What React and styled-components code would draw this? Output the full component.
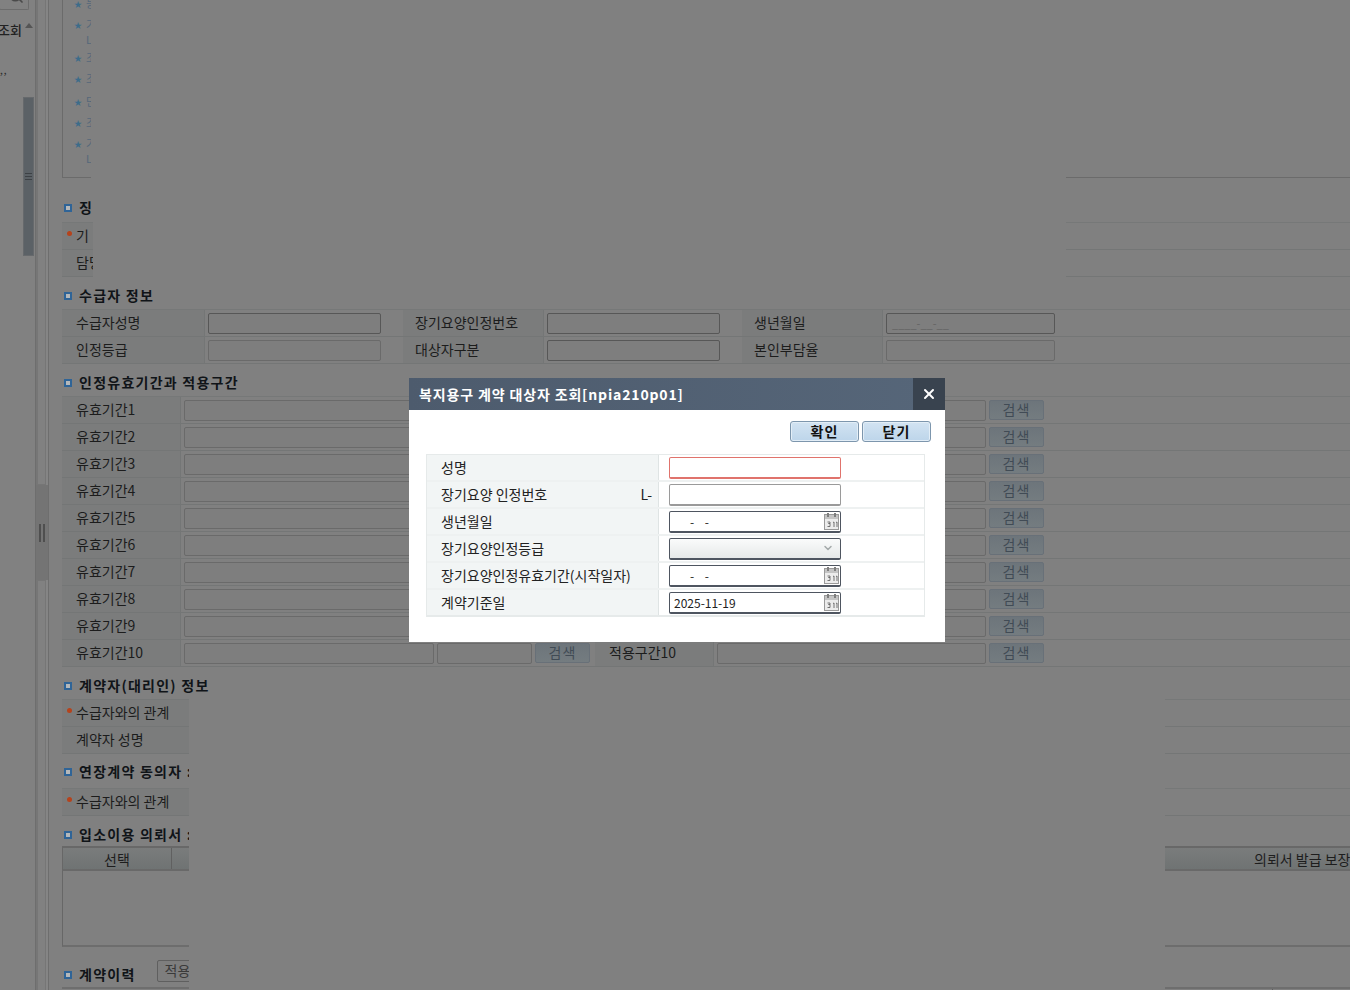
import React from "react";
import styled, { createGlobalStyle } from "styled-components";
import { Search, ChevronDown, X } from "lucide-react";

const GlobalStyle = createGlobalStyle`
  html, body {
    margin: 0;
    padding: 0;
    background: #808080;
    overflow: hidden;
  }
  * {
    box-sizing: border-box;
  }
`;

const FONT = `"Noto Sans CJK KR", "Noto Sans", sans-serif`;

const Page = styled.div`
  position: relative;
  display: flex;
  width: 1350px;
  height: 990px;
  overflow: hidden;
  background: #808080;
  color: #1d1d1d;
  font-family: ${FONT};
  font-size: 14px;
`;

/* left tree panel */
const Sidebar = styled.div`
  flex: 0 0 35px;
  display: flex;
  flex-direction: column;
  background: #818181;
`;

const SearchBtn = styled.div`
  width: 30px;
  height: 10px;
  margin-left: -1px;
  display: flex;
  align-items: flex-end;
  justify-content: flex-end;
  padding-right: 4px;
  border: 1px solid #6c6c6c;
  border-top: 0;
  border-radius: 0 0 2px 2px;
  overflow: hidden;
  color: #4a4a4a;
`;

const SearchGlyph = styled.div`
  margin-bottom: 1px;
`;

const TreeHead = styled.div`
  display: flex;
  justify-content: flex-end;
  height: 15px;
  margin-top: 12px;
  padding-right: 2px;
  gap: 3px;
  line-height: 15px;
  font-size: 13px;
  font-weight: 500;
  color: #222;
`;

const TreeTitle = styled.span`
  width: 26px;
  margin-left: -6px;
  white-space: nowrap;
  overflow: hidden;
  direction: rtl;
`;

const TreeArrow = styled.i`
  width: 0;
  height: 0;
  margin-top: 1px;
  border: 4px solid transparent;
  border-top: 0;
  border-bottom: 5px solid #555;
`;

const TreeDots = styled.div`
  margin-top: 29px;
  height: 8px;
  font-size: 10px;
  line-height: 8px;
  letter-spacing: 1px;
  color: #2c2c2c;
`;

const Thumb = styled.div`
  align-self: flex-end;
  width: 11px;
  height: 159px;
  margin-top: 23px;
  margin-right: 1px;
  background: #5b6166;
  border: 1px solid #66696c;
  display: flex;
  align-items: center;
  justify-content: center;
`;

const Grip = styled.i`
  width: 7px;
  height: 7px;
  margin-left: -1px;
  border-top: 1px solid #3d4145;
  border-bottom: 1px solid #3d4145;
  background: linear-gradient(#3d4145, #3d4145) center / 100% 1px no-repeat;
`;

/* splitter between the tree and the form */
const Splitter = styled.div`
  flex: 0 0 14px;
  display: flex;
  flex-direction: column;
  border-left: 1px solid #6e6e6e;
  border-right: 1px solid #6e6e6e;
  background: #858585;
`;

const SplitEnd = styled.div`
  height: ${(p) => p.$h}px;
  width: 10px;
  border-right: 1px solid #767676;
  border-left: 2px solid #767676;
  ${(p) => (p.$top ? "border-bottom: 1px solid #767676;" : "border-top: 1px solid #767676;")}
  background: #818181;
`;

const SplitHandle = styled.div`
  flex: 0 0 95px;
  background: #747474;
  display: flex;
  align-items: center;
  justify-content: center;
  gap: 2px;
`;

const HandleBar = styled.i`
  width: 2px;
  height: 18px;
  background: #4f4f4f;
`;

/* form area, scrolled so the notice box is cut at the top */
const Main = styled.div`
  flex: 1;
  min-width: 0;
  padding: 0 0 0 13px;
`;

const NoticeBox = styled.div`
  margin-top: -8px;
  height: 186px;
  padding: 4px 0 0 11px;
  border-left: 1px solid #6b6b6b;
  border-bottom: 1px solid #6b6b6b;
`;

const NoticeRow = styled.div`
  display: flex;
  gap: 7px;
  height: ${(p) => p.$h}px;
  font-size: 11px;
  line-height: 15px;
  color: #55687a;
`;

const Star = styled.span`
  width: 5px;
  color: #3d6c8a;
  font-size: 8px;
`;

const SectionTitle = styled.div`
  display: flex;
  align-items: center;
  gap: 7px;
  height: 20px;
  margin-top: ${(p) => p.$mt}px;
  padding: 0 0 1px 2px;
  font-weight: 700;
  font-size: 14px;
  letter-spacing: 1.25px;
  color: #101418;
  white-space: nowrap;
`;

const TitleMark = styled.i`
  flex: none;
  width: 8px;
  height: 8px;
  margin-top: 3px;
  border: 2px solid #2f6497;
  background: #b5b8ba;
`;

const Table = styled.div`
  margin-top: ${(p) => p.$mt ?? 5}px;
  border-top: 1px solid #767878;
`;

const Row = styled.div`
  display: flex;
  align-items: center;
  height: 27px;
  border-bottom: 1px solid #747676;
`;

const Label = styled.div`
  flex: 0 0 ${(p) => p.$w}px;
  height: 100%;
  padding: 0 0 2px ${(p) => p.$pad ?? 14}px;
  margin-right: 3px;
  display: flex;
  align-items: center;
  background: #7b7c7c;
  border-right: 1px solid #747676;
  white-space: nowrap;
  font-size: 14px;
  color: #1c1c1c;
`;

const RequiredDot = styled.i`
  width: 5px;
  height: 5px;
  margin: -3px 4px 0 -9px;
  border-radius: 50%;
  background: #b5431c;
`;

const Field = styled.div`
  flex: 0 0 ${(p) => p.$w}px;
  height: 21px;
  margin-right: ${(p) => p.$mr ?? 3}px;
  padding-left: 5px;
  border: 1px solid ${(p) => (p.$strong ? "#575757" : "#6a6a6a")};
  border-radius: 2px;
  background: #7e7e7e;
  font-size: 11px;
  line-height: 19px;
  color: #636363;
`;

const SearchButton = styled.div`
  flex: 0 0 55px;
  height: 20px;
  margin-right: ${(p) => p.$mr ?? 0}px;
  border: 1px solid #687078;
  border-radius: 2px;
  background: linear-gradient(#6d757b, #747c80);
  text-align: center;
  line-height: 17px;
  font-size: 14px;
  letter-spacing: 1px;
  color: #414b55;
`;

const GridHead = styled.div`
  display: flex;
  align-items: center;
  height: 25px;
  margin-top: 2px;
  border-top: 2px solid #686868;
  border-left: 1px solid #676767;
  border-bottom: 2px solid #696969;
  background: linear-gradient(#7a7c7c, #6f7373);
`;

const GridCell = styled.div`
  flex: 0 0 ${(p) => p.$w}px;
  height: 100%;
  display: flex;
  align-items: center;
  justify-content: center;
  border-right: 1px solid #606060;
`;

const GridLast = styled.div`
  flex: 1;
  padding-left: 1082px;
  min-width: 0;
  overflow: hidden;
  white-space: nowrap;
`;

const GridBody = styled.div`
  height: 76px;
  border-left: 1px solid #676767;
  border-bottom: 2px solid #6d6d6d;
`;

const ApplyButton = styled.div`
  flex: none;
  width: 60px;
  height: 22px;
  margin: -5px 0 0 14px;
  padding-left: 7px;
  border: 1px solid #5f5f5f;
  border-radius: 2px;
  background: #7e7e7e;
  font-weight: 400;
  letter-spacing: 0;
  line-height: 19px;
  font-size: 14px;
  color: #3a3a3a;
`;

const HistoryHead = styled.div`
  height: 20px;
  margin-top: 3px;
  border-top: 2px solid #6e6e6e;
  display: flex;
  justify-content: flex-end;
  padding-right: 77px;
`;

const HistoryTick = styled.i`
  width: 1px;
  height: 5px;
  background: #5e5e5e;
`;

/* the empty patches the dimmed page shows over its own form */
const Blank = styled.div`
  position: absolute;
  left: ${(p) => p.$x}px;
  top: ${(p) => p.$y}px;
  width: ${(p) => p.$w}px;
  height: ${(p) => p.$h}px;
  background: #808080;
`;

const Dialog = styled.div`
  position: absolute;
  left: 409px;
  top: 378px;
  width: 536px;
  height: 264px;
  background: #fff;
  display: flex;
  flex-direction: column;
`;

const DialogHead = styled.div`
  flex: 0 0 32px;
  display: flex;
  align-items: stretch;
  justify-content: space-between;
  background: linear-gradient(90deg, #4d5b6d, #566679);
`;

const DialogTitle = styled.div`
  padding-left: 10px;
  line-height: 32px;
  color: #fff;
  font-weight: 700;
  font-size: 14px;
  letter-spacing: 0.85px;
  white-space: nowrap;
`;

const CloseBtn = styled.div`
  flex: 0 0 32px;
  display: flex;
  align-items: center;
  justify-content: center;
  background: #39434f;
  color: #fff;
`;

const DialogButtons = styled.div`
  display: flex;
  justify-content: flex-end;
  gap: 3px;
  padding: 11px 14px 0 0;
`;

const DialogButton = styled.div`
  width: 69px;
  height: 21px;
  border: 1px solid #7d96ad;
  border-radius: 3px;
  background: linear-gradient(#d2e3f2, #bdd5ea);
  box-shadow: inset 0 0 0 1px #e3eef7;
  text-align: center;
  font-weight: 700;
  font-size: 14px;
  line-height: 19px;
  letter-spacing: 1px;
  color: #111;
`;

const DialogTable = styled.div`
  width: 499px;
  margin: 12px 0 0 17px;
  border: 1px solid #e6eaea;
  border-bottom-width: 2px;
`;

const DialogRow = styled.div`
  display: flex;
  align-items: center;
  height: 27px;
  border-bottom: 2px solid #eef1f1;
  &:last-child {
    height: 25px;
    border-bottom: 0;
  }
`;

const DialogLabel = styled.div`
  flex: 0 0 232px;
  height: 100%;
  display: flex;
  align-items: center;
  justify-content: space-between;
  padding: 0 6px 2px 14px;
  margin-right: 10px;
  background: #f2f5f5;
  border-right: 1px solid #dfe4e4;
  font-size: 14px;
  color: #222;
  white-space: nowrap;
`;

const borderFor = { red: "#e0736c", grey: "#9a9a9a", dark: "#4e5560" };

const InputBox = styled.div`
  flex: 0 0 172px;
  height: 22px;
  display: flex;
  align-items: center;
  justify-content: space-between;
  padding: 0 ${(p) => (p.$select ? 6 : 1)}px 0 4px;
  border: 1px solid ${(p) => borderFor[p.$tone]};
  border-bottom-width: 2px;
  border-radius: 2px;
  background: ${(p) => (p.$select ? "linear-gradient(#fafbfb, #e6e9e9)" : "#fff")};
  font-size: 12px;
  color: #222;
`;

const DateText = styled.span`
  padding-left: ${(p) => (p.$empty ? 16 : 0)}px;
  letter-spacing: ${(p) => (p.$empty ? 4 : 0)}px;
  white-space: pre;
`;

const Calendar = () => (
  <svg width="15" height="17" viewBox="0 0 15 17">
    <rect x="0.5" y="1.5" width="14" height="15" fill="#ececec" stroke="#9a9a9a" />
    <rect x="1" y="2" width="13" height="4" fill="#c4c4c4" />
    <rect x="3" y="0" width="2" height="4" fill="#7e7e7e" />
    <rect x="10" y="0" width="2" height="4" fill="#7e7e7e" />
    <path d="M3.5 9h2.5v1.5h-1.5h1.5v3h-2.5M9 9.5l1-.5v5M12 9.5l1-.5v5" fill="none" stroke="#666" strokeWidth="0.9" />
  </svg>
);

const notices = [
  { h: 21, text: "등" },
  { h: 33, text: "기", more: true },
  { h: 21, text: "조" },
  { h: 23, text: "조" },
  { h: 21, text: "단" },
  { h: 21, text: "조" },
  { h: 30, text: "기", more: true },
];

const periods = [1, 2, 3, 4, 5, 6, 7, 8, 9, 10];

const dialogRows = [
  { label: "성명", tone: "red" },
  { label: "장기요양 인정번호", tone: "grey", prefix: "L-" },
  { label: "생년월일", tone: "dark", date: "- -" },
  { label: "장기요양인정등급", tone: "dark", select: true },
  { label: "장기요양인정유효기간(시작일자)", tone: "dark", date: "- -" },
  { label: "계약기준일", tone: "dark", date: "2025-11-19", filled: true },
];

export default function App() {
  return (
    <Page>
      <GlobalStyle />
      <Sidebar>
        <SearchBtn>
          <SearchGlyph>
            <Search size={16} strokeWidth={2.5} />
          </SearchGlyph>
        </SearchBtn>
        <TreeHead>
          <TreeTitle>조회</TreeTitle>
          <TreeArrow />
        </TreeHead>
        <TreeDots>,,</TreeDots>
        <Thumb>
          <Grip />
        </Thumb>
      </Sidebar>

      <Splitter>
        <SplitEnd $top $h={485} />
        <SplitHandle>
          <HandleBar />
          <HandleBar />
        </SplitHandle>
        <SplitEnd $h={410} />
      </Splitter>

      <Main>
        <NoticeBox>
          {notices.map((n, i) => (
            <NoticeRow key={i} $h={n.h}>
              <Star>★</Star>
              <span>
                {n.text}
                {n.more && (
                  <>
                    <br />L
                  </>
                )}
              </span>
            </NoticeRow>
          ))}
        </NoticeBox>

        <SectionTitle $mt={19}>
          <TitleMark />징
        </SectionTitle>
        <Table>
          <Row>
            <Label $w={140}>
              <RequiredDot />기
            </Label>
          </Row>
          <Row>
            <Label $w={140}>담당</Label>
          </Row>
        </Table>

        <SectionTitle $mt={8}>
          <TitleMark />수급자 정보
        </SectionTitle>
        <Table $mt={4}>
          <Row>
            <Label $w={143}>수급자성명</Label>
            <Field $w={173} $mr={22} $strong />
            <Label $w={141} $pad={12}>장기요양인정번호</Label>
            <Field $w={173} $mr={22} $strong />
            <Label $w={141} $pad={12}>생년월일</Label>
            <Field $w={169} $strong>____-__-__</Field>
          </Row>
          <Row>
            <Label $w={143}>인정등급</Label>
            <Field $w={173} $mr={22} />
            <Label $w={141} $pad={12}>대상자구분</Label>
            <Field $w={173} $mr={22} $strong />
            <Label $w={141} $pad={12}>본인부담율</Label>
            <Field $w={169} />
          </Row>
        </Table>

        <SectionTitle $mt={8}>
          <TitleMark />인정유효기간과 적용구간
        </SectionTitle>
        <Table $mt={4}>
          {periods.map((n) => (
            <Row key={n}>
              <Label $w={119}>유효기간{n}</Label>
              <Field $w={250} />
              <Field $w={95} />
              <SearchButton $mr={5}>검색</SearchButton>
              <Label $w={119}>적용구간{n}</Label>
              <Field $w={269} />
              <SearchButton>검색</SearchButton>
            </Row>
          ))}
        </Table>

        <SectionTitle $mt={8}>
          <TitleMark />계약자(대리인) 정보
        </SectionTitle>
        <Table $mt={4}>
          <Row>
            <Label $w={140}>
              <RequiredDot />수급자와의 관계
            </Label>
          </Row>
          <Row>
            <Label $w={140}>계약자 성명</Label>
          </Row>
        </Table>

        <SectionTitle $mt={7}>
          <TitleMark />연장계약 동의자 :
        </SectionTitle>
        <Table $mt={7}>
          <Row>
            <Label $w={140}>
              <RequiredDot />수급자와의 관계
            </Label>
          </Row>
        </Table>

        <SectionTitle $mt={8}>
          <TitleMark />입소이용 의뢰서 :
        </SectionTitle>
        <GridHead>
          <GridCell $w={109}>선택</GridCell>
          <GridLast>의뢰서 발급 보장기관</GridLast>
        </GridHead>
        <GridBody />

        <SectionTitle $mt={17}>
          <TitleMark />계약이력
          <ApplyButton>적용</ApplyButton>
        </SectionTitle>
        <HistoryHead>
          <HistoryTick />
        </HistoryHead>
      </Main>

      <Blank $x={91} $y={0} $w={975} $h={221} />
      <Blank $x={93} $y={221} $w={973} $h={56} />
      <Blank $x={189} $y={695} $w={976} $h={295} />

      <Dialog>
        <DialogHead>
          <DialogTitle>복지용구 계약 대상자 조회[npia210p01]</DialogTitle>
          <CloseBtn>
            <X size={16} strokeWidth={3} />
          </CloseBtn>
        </DialogHead>
        <DialogButtons>
          <DialogButton>확인</DialogButton>
          <DialogButton>닫기</DialogButton>
        </DialogButtons>
        <DialogTable>
          {dialogRows.map((r) => (
            <DialogRow key={r.label}>
              <DialogLabel>
                <span>{r.label}</span>
                {r.prefix && <span>{r.prefix}</span>}
              </DialogLabel>
              <InputBox $tone={r.tone} $select={r.select}>
                {r.date && <DateText $empty={!r.filled}>{r.date}</DateText>}
                {r.date && <Calendar />}
                {r.select && (
                  <>
                    <span />
                    <ChevronDown size={12} strokeWidth={3} color="#a4aaaa" />
                  </>
                )}
              </InputBox>
            </DialogRow>
          ))}
        </DialogTable>
      </Dialog>
    </Page>
  );
}
